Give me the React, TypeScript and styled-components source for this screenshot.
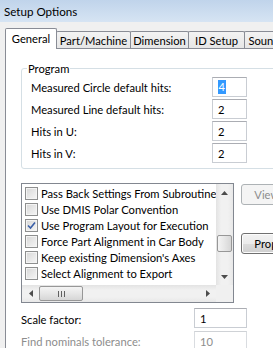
import React from "react";
import styled, { createGlobalStyle } from "styled-components";

const Global = createGlobalStyle`
  html, body { margin: 0; padding: 0; background: #f0f0f0; }
  body { font-family: Lato, "Liberation Sans", sans-serif; font-size: 11.2px; color: #000; }
  * { box-sizing: border-box; }
`;

const Window = styled.div`
  width: 273px;
  height: 348px;
  overflow: hidden;
  background: #f0f0f0;
  display: flex;
  flex-direction: column;
`;

const TitleBar = styled.div`
  height: 22px;
  flex: none;
  background: linear-gradient(#c0d4eb, #d6e4f3);
  display: flex;
  align-items: center;
  padding-left: 4px;
  font-size: 11.6px;
  color: #000;
`;

const Client = styled.div`
  flex: 1;
  display: flex;
  flex-direction: column;
  padding: 6px 0 0 5px;
  min-height: 0;
`;

const TabStrip = styled.div`
  display: flex;
  align-items: flex-end;
  height: 20px;
  flex: none;
`;

const Tab = styled.div<{ $active?: boolean; $w: number }>`
  width: ${(p) => p.$w}px;
  flex: none;
  height: ${(p) => (p.$active ? 21 : 17)}px;
  margin-bottom: ${(p) => (p.$active ? -1 : 0)}px;
  margin-right: -1px;
  position: relative;
  z-index: ${(p) => (p.$active ? 2 : 1)};
  border: 1px solid #898c95;
  border-bottom: none;
  border-radius: 2px 2px 0 0;
  background: ${(p) => (p.$active ? "#fff" : "linear-gradient(#f3f3f3, #e6e6e6)")};
  display: flex;
  align-items: center;
  justify-content: center;
  white-space: nowrap;
  overflow: hidden;
  padding-bottom: ${(p) => (p.$active ? 2 : 0)}px;
`;

const Panel = styled.div`
  flex: 1;
  width: 300px;
  background: #fff;
  border-left: 1px solid #898c95;
  border-top: 1px solid #898c95;
  padding: 19px 0 0 15px;
  display: flex;
  flex-direction: column;
`;

const Group = styled.div`
  position: relative;
  width: 270px;
  height: 101px;
  flex: none;
  border: 1px solid #d5dfe5;
  border-radius: 3px;
  padding: 8px 0 0 9px;
`;

const Legend = styled.div`
  position: absolute;
  top: -8px;
  left: 5px;
  padding: 0 1px;
  background: #fff;
  line-height: 15px;
`;

const FieldGrid = styled.div<{ $label: number; $input: number; $gap: number }>`
  display: grid;
  grid-template-columns: ${(p) => p.$label}px ${(p) => p.$input}px;
  row-gap: ${(p) => p.$gap}px;
  align-items: center;
`;

const Label = styled.div<{ $disabled?: boolean; $shift?: number }>`
  white-space: nowrap;
  color: ${(p) => (p.$disabled ? "#8d8d8d" : "#000")};
  padding-top: ${(p) => p.$shift || 0}px;
`;

const Input = styled.div<{ $disabled?: boolean }>`
  height: 20px;
  border: 1px solid ${(p) => (p.$disabled ? "#d9dce0" : "#c9cdd3")};
  border-top-color: ${(p) => (p.$disabled ? "#cfd2d6" : "#abadb3")};
  background: #fff;
  display: flex;
  align-items: center;
  padding-left: 5px;
  color: ${(p) => (p.$disabled ? "#8d8d8d" : "#000")};
`;

const Selected = styled.span`
  background: #3399ff;
  color: #fff;
  line-height: 14px;
  padding: 0 0.5px;
`;

const ListRow = styled.div`
  display: flex;
  margin-top: 14px;
  flex: none;
`;

const ListBox = styled.div`
  width: 227px;
  height: 120px;
  border: 1px solid #828790;
  display: flex;
  flex-direction: column;
  background: #fff;
`;

const ListTop = styled.div`
  display: flex;
  height: 101px;
`;

const Items = styled.div`
  flex: 1;
  overflow: hidden;
  padding-top: 1px;
`;

const Item = styled.div`
  height: 16px;
  display: flex;
  align-items: center;
  padding-left: 3px;
  white-space: nowrap;
`;

const Check = styled.span`
  width: 13px;
  height: 13px;
  flex: none;
  margin-right: 3px;
  border: 1px solid #8e8f8f;
  background: linear-gradient(135deg, #d6d6d6, #f6f6f6);
  box-shadow: inset 0 0 0 1px #f4f4f4;
  display: flex;
  align-items: center;
  justify-content: center;
`;

const VScroll = styled.div`
  width: 17px;
  flex: none;
  display: flex;
  flex-direction: column;
  background: linear-gradient(to right, #e3e3e3, #f1f1f1 30%, #f1f1f1 70%, #e8e8e8);
`;

const ArrowBtn = styled.div`
  width: 17px;
  height: 17px;
  flex: none;
  display: flex;
  align-items: center;
  justify-content: center;
`;

const Track = styled.div`
  flex: 1;
  display: flex;
  flex-direction: column;
`;

const VThumb = styled.div`
  margin: 34px 1px 0;
  height: 17px;
  border: 1px solid #979797;
  border-radius: 2px;
  background: linear-gradient(to right, #f4f4f4, #e6e6e6 50%, #d6d6d6);
`;

const HScroll = styled.div`
  height: 17px;
  display: flex;
  background: linear-gradient(#e3e3e3, #f1f1f1 30%, #f1f1f1 70%, #e8e8e8);
`;

const HThumb = styled.div`
  width: 44px;
  margin: 1px 0;
  border: 1px solid #979797;
  border-radius: 2px;
  background: linear-gradient(#f4f4f4, #e6e6e6 50%, #d6d6d6);
  display: flex;
  align-items: center;
  justify-content: center;
`;

const Spacer = styled.div`
  flex: 1;
`;

const Corner = styled.div`
  width: 17px;
  flex: none;
  background: #f0f0f0;
`;

const ButtonCol = styled.div`
  display: flex;
  flex-direction: column;
  margin-left: 7px;
`;

const Button = styled.div<{ $disabled?: boolean; $top: number }>`
  width: 80px;
  height: 21px;
  margin-top: ${(p) => p.$top}px;
  border: 1px solid ${(p) => (p.$disabled ? "#adb2b5" : "#707070")};
  border-radius: 3px;
  background: ${(p) =>
    p.$disabled ? "#f4f4f4" : "linear-gradient(#f2f2f2, #ebebeb 50%, #dddddd 51%, #cfcfcf)"};
  color: ${(p) => (p.$disabled ? "#8c8c8c" : "#000")};
  display: flex;
  align-items: center;
  padding-left: 12px;
  white-space: nowrap;
  box-shadow: inset 0 0 0 1px ${(p) => (p.$disabled ? "#f4f4f4" : "#fcfcfc")};
`;

const Bottom = styled.div`
  margin-top: 5px;
`;

const Up = () => (
  <svg width="7" height="4" viewBox="0 0 7 4">
    <polygon points="3.5,0 7,4 0,4" fill="#4d4d4d" />
  </svg>
);
const Down = () => (
  <svg width="7" height="4" viewBox="0 0 7 4">
    <polygon points="0,0 7,0 3.5,4" fill="#4d4d4d" />
  </svg>
);
const Left = () => (
  <svg width="4" height="7" viewBox="0 0 4 7">
    <polygon points="4,0 4,7 0,3.5" fill="#4d4d4d" />
  </svg>
);
const Right = () => (
  <svg width="4" height="7" viewBox="0 0 4 7">
    <polygon points="0,0 0,7 4,3.5" fill="#4d4d4d" />
  </svg>
);
const Grip = () => (
  <svg width="7" height="6" viewBox="0 0 7 6">
    <rect x="0" y="0" width="1" height="6" fill="#606060" />
    <rect x="3" y="0" width="1" height="6" fill="#606060" />
    <rect x="6" y="0" width="1" height="6" fill="#606060" />
  </svg>
);
const Tick = () => (
  <svg width="9" height="9" viewBox="0 0 9 9">
    <path d="M1 4.5 L3.5 7 L8 1.5" stroke="#3a5fa8" strokeWidth="1.6" fill="none" />
  </svg>
);

const items = [
  { label: "Pass Back Settings From Subroutine", checked: false },
  { label: "Use DMIS Polar Convention", checked: false },
  { label: "Use Program Layout for Execution", checked: true },
  { label: "Force Part Alignment in Car Body", checked: false },
  { label: "Keep existing Dimension's Axes", checked: false },
  { label: "Select Alignment to Export", checked: false },
];

const tabs = [
  { label: "General", w: 52, active: true },
  { label: "Part/Machine", w: 75 },
  { label: "Dimension", w: 59 },
  { label: "ID Setup", w: 57 },
  { label: "Sound", w: 40 },
];

export default function App() {
  return (
    <>
      <Global />
      <Window>
        <TitleBar>Setup Options</TitleBar>
        <Client>
          <TabStrip>
            {tabs.map((t) => (
              <Tab key={t.label} $active={t.active} $w={t.w}>
                {t.label}
              </Tab>
            ))}
          </TabStrip>
          <Panel>
            <Group>
              <Legend>Program</Legend>
              <FieldGrid $label={181} $input={35} $gap={2}>
                <Label>Measured Circle default hits:</Label>
                <Input>
                  <Selected>4</Selected>
                </Input>
                <Label>Measured Line default hits:</Label>
                <Input>2</Input>
                <Label>Hits in U:</Label>
                <Input>2</Input>
                <Label>Hits in V:</Label>
                <Input>2</Input>
              </FieldGrid>
            </Group>
            <ListRow>
              <ListBox>
                <ListTop>
                  <Items>
                    {items.map((it) => (
                      <Item key={it.label}>
                        <Check>{it.checked && <Tick />}</Check>
                        {it.label}
                      </Item>
                    ))}
                  </Items>
                  <VScroll>
                    <ArrowBtn>
                      <Up />
                    </ArrowBtn>
                    <Track>
                      <VThumb />
                    </Track>
                    <ArrowBtn>
                      <Down />
                    </ArrowBtn>
                  </VScroll>
                </ListTop>
                <HScroll>
                  <ArrowBtn>
                    <Left />
                  </ArrowBtn>
                  <HThumb>
                    <Grip />
                  </HThumb>
                  <Spacer />
                  <ArrowBtn>
                    <Right />
                  </ArrowBtn>
                  <Corner />
                </HScroll>
              </ListBox>
              <ButtonCol>
                <Button $disabled $top={1}>View...</Button>
                <Button $top={28}>Properties...</Button>
              </ButtonCol>
            </ListRow>
            <Bottom>
              <FieldGrid $label={173} $input={53} $gap={3}>
                <Label $shift={3}>Scale factor:</Label>
                <Input>1</Input>
                <Label $disabled>Find nominals tolerance:</Label>
                <Input $disabled>10</Input>
              </FieldGrid>
            </Bottom>
          </Panel>
        </Client>
      </Window>
    </>
  );
}
